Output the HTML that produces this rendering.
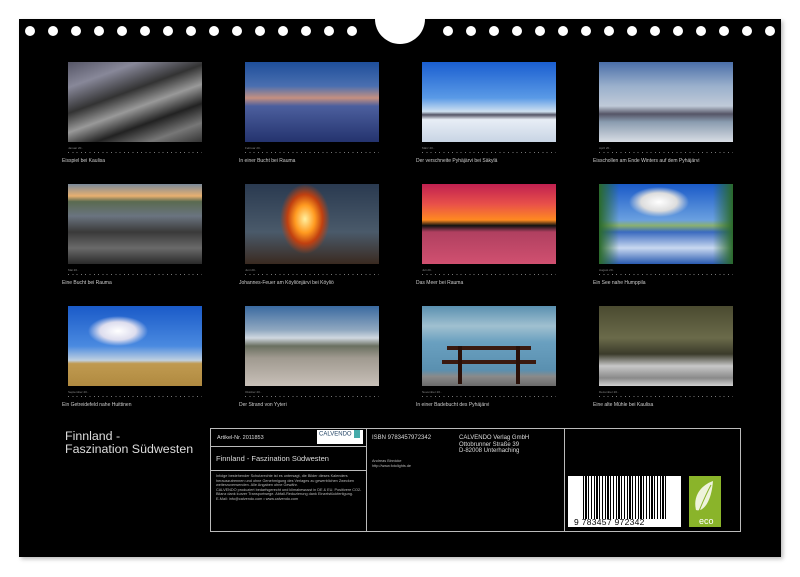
<!DOCTYPE html>
<html><head><meta charset="utf-8"><style>
body{margin:0;width:800px;height:577px;background:#fff;position:relative;overflow:hidden;font-family:"Liberation Sans",sans-serif}
.bg{position:absolute;left:19px;top:19px;width:762px;height:538px;background:#000;box-shadow:2px 2px 4px #bbb}
.h{position:absolute;width:10px;height:10px;border-radius:50%;background:#fff;top:26px}
.n{position:absolute;left:375px;top:-6px;width:50px;height:50px;border-radius:50%;background:#fff}
.p{position:absolute;width:134px;height:80px}
.m{position:absolute;font-size:3px;color:#888}
.d{position:absolute;width:134px;height:1px;background:repeating-linear-gradient(90deg,#777 0 1px,transparent 1px 4.3px)}
.c{position:absolute;font-size:5px;color:#ccc}
.t{position:absolute;color:#ddd}
.ln{position:absolute;background:#bbb}
</style></head><body>
<div class="bg"></div>
<div class="n"></div>
<script>
for(let i=0;i<15;i++){document.write('<div class="h" style="left:'+(25+i*23)+'px"></div><div class="h" style="left:'+(443+i*23)+'px"></div>');}
</script>
<div class="p" style="left:68px;top:62px;background:linear-gradient(160deg,#556 0%,#889 20%,#333 40%,#999 55%,#222 70%,#777 85%,#333 100%)"></div>
<div class="p" style="left:245px;top:62px;background:linear-gradient(180deg,#1e4e9a 0%,#4a6fb0 30%,#c59080 45%,#4c5f9e 55%,#24336e 100%)"></div>
<div class="p" style="left:422px;top:62px;background:linear-gradient(180deg,#1a5ed0 0%,#5a9ae6 45%,#cfe0f0 62%,#556 66%,#e8eef6 72%,#c8d4e4 100%)"></div>
<div class="p" style="left:599px;top:62px;background:linear-gradient(180deg,#4a6ea8 0%,#9ab0cc 30%,#c0cad8 55%,#556 65%,#8a9cb0 75%,#d8dde4 100%)"></div>
<div class="p" style="left:68px;top:184px;background:linear-gradient(180deg,#7a8a9a 0%,#e8b070 15%,#5a6a50 22%,#6a7480 40%,#3a3a3a 60%,#6a6a6a 80%,#2a2a2a 100%)"></div>
<div class="p" style="left:245px;top:184px;background:radial-gradient(ellipse 25px 35px at 60px 35px,#fff0a0 0%,#ff9a20 40%,#c04010 70%,transparent 100%),linear-gradient(180deg,#2a3a50 0%,#4a5a6a 60%,#3a2a20 100%)"></div>
<div class="p" style="left:422px;top:184px;background:linear-gradient(180deg,#c02050 0%,#e8504a 25%,#ff8a20 45%,#111 52%,#b04060 60%,#d05070 100%)"></div>
<div class="p" style="left:599px;top:184px;background:radial-gradient(ellipse 30px 15px at 60px 18px,#fff 0%,#ddd 60%,transparent 100%),linear-gradient(90deg,#2a6a2a 0%,transparent 15%,transparent 85%,#2a6a2a 100%),linear-gradient(180deg,#1a5ac8 0%,#6aa0e0 45%,#8ab070 52%,#3a6ac0 60%,#c8d8f0 80%,#2a5ab0 100%)"></div>
<div class="p" style="left:68px;top:306px;background:radial-gradient(ellipse 30px 15px at 50px 25px,#fff 0%,#dde 60%,transparent 100%),linear-gradient(180deg,#1a5ac8 0%,#4a8ae0 50%,#c0d0e0 68%,#c09a50 72%,#b08a40 100%)"></div>
<div class="p" style="left:245px;top:306px;background:linear-gradient(180deg,#3a6aa0 0%,#90a8c0 30%,#d0d8e0 40%,#6a7060 50%,#a09a90 65%,#c8c0b8 100%)"></div>
<div class="p" style="left:422px;top:306px;background:linear-gradient(180deg,#5a90b0 0%,#a0c0d0 25%,#6aa0c0 45%,#5a90b0 80%,#8a8a8a 88%,#6a6a6a 100%)"><div style="position:absolute;left:25px;top:40px;width:84px;height:4px;background:#3a1a10"></div><div style="position:absolute;left:20px;top:54px;width:94px;height:4px;background:#3a1a10"></div><div style="position:absolute;left:36px;top:40px;width:4px;height:38px;background:#2a1008"></div><div style="position:absolute;left:94px;top:40px;width:4px;height:38px;background:#2a1008"></div></div>
<div class="p" style="left:599px;top:306px;background:linear-gradient(180deg,#4a4a30 0%,#6a6a4a 40%,#3a3a2a 60%,#c8c8c8 75%,#8a8a8a 90%,#d0d0d0 100%)"></div>
<script>
const cx=[68,245,422,599],ry=[62,184,306];
const mo=["Januar","Februar","März","April","Mai","Juni","Juli","August","September","Oktober","November","Dezember"];
const cap=["Eisspiel bei Kaulisa","In einer Bucht bei Rauma","Der verschneite Pyhäjärvi bei Säkylä","Eisschollen am Ende Winters auf dem Pyhäjärvi","Eine Bucht bei Rauma","Johannes-Feuer am Köyliönjärvi bei Köyliö","Das Meer bei Rauma","Ein See nahe Humppila","Ein Getreidefeld nahe Huittinen","Der Strand von Yyteri","In einer Badebucht des Pyhäjärvi","Eine alte Mühle bei Kaulisa"];
for(let r=0;r<3;r++)for(let c=0;c<4;c++){let i=r*4+c,x=cx[c],y=ry[r];
document.write('<div class="m" style="left:'+x+'px;top:'+(y+84)+'px">'+mo[i]+' 20..</div><div class="d" style="left:'+x+'px;top:'+(y+90)+'px"></div><div class="c" style="left:'+(x-6)+'px;top:'+(y+96)+'px">'+cap[i]+'</div>');}
</script>
<div class="t" style="left:65px;top:430px;font-size:12.4px;line-height:13px">Finnland -<br>Faszination Südwesten</div>
<div style="position:absolute;left:210px;top:428px;width:529px;height:102px;border:1px solid #bbb"></div>
<div class="ln" style="left:366px;top:428px;width:1px;height:103px"></div>
<div class="ln" style="left:564px;top:428px;width:1px;height:103px"></div>
<div class="ln" style="left:210px;top:446px;width:156px;height:1px"></div>
<div class="ln" style="left:210px;top:470px;width:156px;height:1px"></div>
<div class="t" style="left:217px;top:435px;font-size:5.5px">Artikel-Nr. 2011853</div>
<div style="position:absolute;left:317px;top:430px;width:46px;height:14px;background:#fff;font-size:6px;color:#246;line-height:9px;padding-left:2px;box-sizing:border-box">CALVENDO<span style="display:inline-block;width:6px;height:8px;background:#4aa;margin-left:2px;vertical-align:middle"></span></div>
<div class="t" style="left:216px;top:454px;font-size:7.5px">Finnland - Faszination Südwesten</div>
<div class="t" style="left:216px;top:474px;font-size:3.8px;line-height:4.6px;color:#bbb;width:148px">Infolge bestehender Schutzrechte ist es untersagt, die Bilder dieses Kalenders herauszutrennen und ohne Genehmigung des Verlages zu gewerblichen Zwecken weiterzuverwenden. Alle Angaben ohne Gewähr.<br>CALVENDO produziert bedarfsgerecht und klimabewusst in DE &amp; EU. Positivere CO2-Bilanz dank kurzer Transportwege. Abfall-Reduzierung dank Einzelstückfertigung.<br>E-Mail: info@calvendo.com • www.calvendo.com</div>
<div class="t" style="left:372px;top:435px;font-size:6px">ISBN 9783457972342</div>
<div class="t" style="left:372px;top:459px;font-size:3.8px;line-height:4.6px;color:#bbb">Andreas Binnicke<br>http://www.fotolights.de</div>
<div class="t" style="left:459px;top:435px;font-size:6px;line-height:6.5px">CALVENDO Verlag GmbH<br>Ottobrunner Straße 39<br>D-82008 Unterhaching</div>
<div style="position:absolute;left:568px;top:476px;width:113px;height:51px;background:#fff"></div>
<div style="position:absolute;left:583px;top:476px;width:83px;height:43px;background:repeating-linear-gradient(90deg,#000 0 1px,#fff 1px 2px,#000 2px 4px,#fff 4px 5px,#000 5px 6px,#fff 6px 8px,#000 8px 9px,#fff 9px 11px)"></div>
<div style="position:absolute;left:574px;top:517px;font-size:8.5px;color:#000;line-height:10px;letter-spacing:0.3px">9 783457 972342</div>
<div style="position:absolute;left:689px;top:476px;width:32px;height:51px;background:#8ab42a"><svg width="32" height="51"><path d="M24 5 C10 10 4 22 7 34 C12 36 22 30 24 5Z" fill="#eef3dc"/><path d="M22 9 C16 20 12 30 8 40" stroke="#8ab42a" stroke-width="1" fill="none"/><text x="10" y="48" font-size="9" fill="#fff" font-family="Liberation Sans">eco</text></svg></div>
</body></html>
